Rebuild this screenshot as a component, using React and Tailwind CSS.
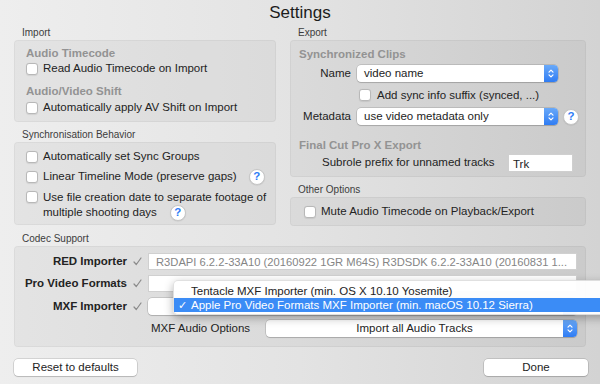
import React from 'react';

// small building blocks for the mac-style settings sheet
const Checkbox = () => (
  <span className="inline-block w-[12px] h-[12px] shrink-0 rounded-[3px] bg-white border border-[#b8b8b8] shadow-[0_0.5px_1px_rgba(0,0,0,0.08)]" />
);

const Help = () => (
  <span className="inline-flex items-center justify-center w-[16px] h-[16px] shrink-0 rounded-full bg-white border border-[#c6c6c6] shadow-[0_0.5px_1px_rgba(0,0,0,0.1)] text-[#2f7df6] text-[11.5px] font-bold leading-none">?</span>
);

const Stepper = () => (
  <span className="w-[14px] shrink-0 rounded-r-[4px] bg-linear-to-b from-[#69a9f9] to-[#2f7cf3] flex items-center justify-center">
    <svg width="8" height="11" viewBox="0 0 8 11" fill="none" stroke="white" strokeWidth="1.2" strokeLinecap="round" strokeLinejoin="round">
      <path d="M2 4.2 L4 2.2 L6 4.2 M2 6.8 L4 8.8 L6 6.8" />
    </svg>
  </span>
);

const Select = ({ value, className = '', center }) => (
  <div className={`h-[17px] flex bg-white rounded-[4px] shadow-[0_0_0_0.5px_rgba(0,0,0,0.22),0_1px_1px_rgba(0,0,0,0.12)] ${className}`}>
    <span className={`flex-1 px-[7px] leading-[17px] whitespace-nowrap overflow-hidden ${center ? 'text-center' : ''}`}>{value}</span>
    <Stepper />
  </div>
);

const Label = ({ children }) => (
  <div className="h-[14px] leading-[14px] pl-[8px] text-[10px] text-[#3c3c3c]">{children}</div>
);

const Heading = ({ children, className = '' }) => (
  <div className={`h-[16px] leading-[16px] font-bold text-[#939393] ${className}`}>{children}</div>
);

const Row = ({ children, className = '' }) => (
  <div className={`h-[16px] flex items-center gap-[5px] whitespace-nowrap ${className}`}>{children}</div>
);

const Box = ({ children, className = '' }) => (
  <div className={`rounded-[4px] bg-black/[0.04] border border-black/[0.045] ${className}`}>{children}</div>
);

const Check = () => (
  <svg width="9" height="9" viewBox="0 0 9 9" fill="none" stroke="#8a8a8a" strokeWidth="1.2" strokeLinecap="round" strokeLinejoin="round">
    <path d="M1 5 L3.3 7.5 L8 1" />
  </svg>
);

const Button = ({ children, className = '' }) => (
  <div className={`h-[17px] leading-[17px] text-center bg-white rounded-[4px] shadow-[0_0_0_0.5px_rgba(0,0,0,0.22),0_1px_1px_rgba(0,0,0,0.12)] ${className}`}>{children}</div>
);

const App = () => {
  return (
    <div className="relative w-[600px] h-[384px] overflow-hidden bg-linear-to-r from-[#eeeeee] via-[#e3e3e3] to-[#d3d3d3] font-['Liberation_Sans',Arial,sans-serif] text-[11.5px] text-[#232323]">
      {/* Titel */}
      <div className="h-[26px] flex items-center justify-center text-[17px] text-[#1c1c1c]">Settings</div>

      <div className="px-[14px]">
        <div className="flex gap-[14px]">
          {/* linke Spalte */}
          <div className="w-[262px] flex flex-col">
            <Label>Import</Label>
            <Box className="h-[82px] pt-[4px] pl-[11px]">
              <Heading>Audio Timecode</Heading>
              <Row>
                <Checkbox />
                <span>Read Audio Timecode on Import</span>
              </Row>
              <Heading className="mt-[6px]">Audio/Video Shift</Heading>
              <Row className="mt-[1px]">
                <Checkbox />
                <span>Automatically apply AV Shift on Import</span>
              </Row>
            </Box>

            <div className="mt-[6px]">
              <Label>Synchronisation Behavior</Label>
            </div>
            <Box className="h-[83px] pt-[6px] pl-[11px]">
              <Row>
                <Checkbox />
                <span>Automatically set Sync Groups</span>
              </Row>
              <Row className="mt-[4px]">
                <Checkbox />
                <span>Linear Timeline Mode (preserve gaps)</span>
                <span className="ml-[7px]"><Help /></span>
              </Row>
              <div className="mt-[4px] flex gap-[5px]">
                <span className="mt-[2px]"><Checkbox /></span>
                <div>
                  <div className="h-[16px] leading-[16px] whitespace-nowrap">Use file creation date to separate footage of</div>
                  <div className="h-[16px] flex items-center whitespace-nowrap">
                    multiple shooting days
                    <span className="ml-[13px]"><Help /></span>
                  </div>
                </div>
              </div>
            </Box>
          </div>

          {/* rechte Spalte */}
          <div className="flex-1 flex flex-col">
            <Label>Export</Label>
            <Box className="h-[137px] pt-[5px] pl-[8px]">
              <Heading>Synchronized Clips</Heading>
              <div className="mt-[3px] flex items-center">
                <span className="w-[52px] text-right">Name</span>
                <Select value="video name" className="ml-[6px] w-[201px]" />
              </div>
              <Row className="mt-[5px] pl-[60px]">
                <Checkbox />
                <span className="ml-[1px]">Add sync info suffix (synced, ...)</span>
              </Row>
              <div className="mt-[5px] flex items-center">
                <span className="w-[52px] text-right">Metadata</span>
                <Select value="use video metadata only" className="ml-[6px] w-[201px]" />
                <span className="ml-[5px]"><Help /></span>
              </div>
              <Heading className="mt-[11px]">Final Cut Pro X Export</Heading>
              <div className="mt-[1px] flex items-center pl-[23px] pr-[12px]">
                <span className="whitespace-nowrap">Subrole prefix for unnamed tracks</span>
                <div className="ml-auto w-[65px] h-[18px] leading-[18px] bg-white pl-[4px] border border-[#cfcfcf]">Trk</div>
              </div>
            </Box>

            <div className="mt-[6px]">
              <Label>Other Options</Label>
            </div>
            <Box className="h-[29px] pt-[6px] pl-[13px]">
              <Row>
                <Checkbox />
                <span>Mute Audio Timecode on Playback/Export</span>
              </Row>
            </Box>
          </div>
        </div>

        {/* Codec */}
        <div className="mt-[6px]">
          <Label>Codec Support</Label>
        </div>
        <Box className="h-[101px] pt-[6px] pr-[8px] flex flex-col">
          <div className="flex items-center h-[17px]">
            <span className="w-[112px] text-right font-bold">RED Importer</span>
            <span className="ml-[6px] w-[8px]"><Check /></span>
            <div className="ml-[7px] flex-1 h-[17px] leading-[17px] bg-white pl-[7px] border border-[#d0d0d0] text-[11.2px] text-[#858585] whitespace-nowrap overflow-hidden">
              R3DAPI 6.2.2-33A10 (20160922 1GR M64S) R3DSDK 6.2.2-33A10 (20160831 1...
            </div>
          </div>
          <div className="mt-[5px] flex items-center h-[17px]">
            <span className="w-[112px] text-right font-bold">Pro Video Formats</span>
            <span className="ml-[6px] w-[8px]"><Check /></span>
            <div className="ml-[7px] flex-1 h-[17px] bg-white border border-[#d0d0d0]" />
          </div>
          <div className="mt-[6px] flex items-center h-[17px]">
            <span className="w-[112px] text-right font-bold">MXF Importer</span>
            <span className="ml-[6px] w-[8px]"><Check /></span>
            <Select value="" className="ml-[7px] flex-1" />
          </div>
          <div className="mt-[5px] flex items-center h-[17px]">
            <span className="ml-[136px] whitespace-nowrap">MXF Audio Options</span>
            <Select value="Import all Audio Tracks" center className="ml-auto w-[311px]" />
          </div>
        </Box>

        <div className="mt-[12px] flex justify-between">
          <Button className="w-[123px]">Reset to defaults</Button>
          <Button className="w-[104px] -mr-[2px]">Done</Button>
        </div>
      </div>

      {/* offenes Popup-Menü */}
      <div className="absolute left-[173px] top-[280px] w-[440px] h-[35px] py-[3px] bg-white/95 rounded-[5px] border border-black/[0.12] shadow-[0_3px_10px_rgba(0,0,0,0.3)]">
        <div className="h-[14px] leading-[14px] pl-[17px] whitespace-nowrap">Tentacle MXF Importer (min. OS X 10.10 Yosemite)</div>
        <div className="h-[14px] leading-[14px] bg-[#3b8cf6] text-white flex items-center whitespace-nowrap">
          <span className="w-[17px] pl-[4px] text-[11px]">✓</span>
          <span>Apple Pro Video Formats MXF Importer (min. macOS 10.12 Sierra)</span>
        </div>
      </div>
    </div>
  );
};

export default App;
